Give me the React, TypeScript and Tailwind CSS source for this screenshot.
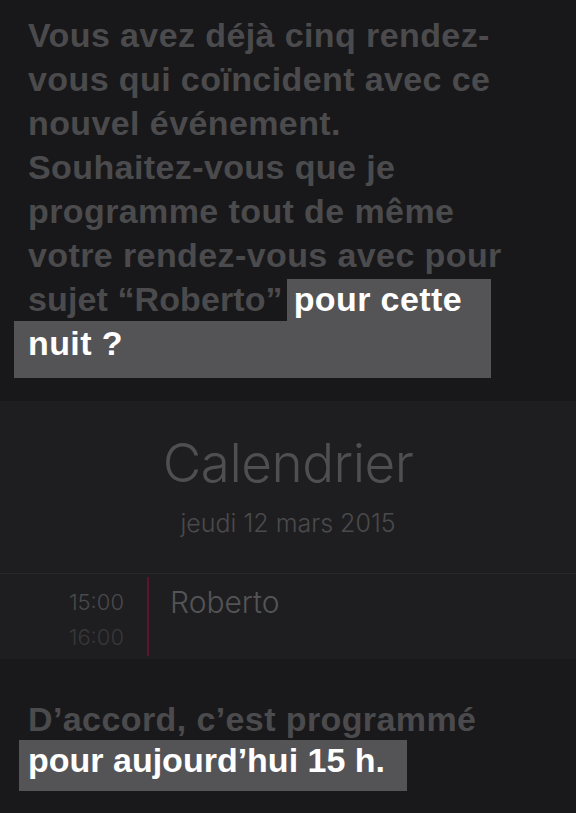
import React from "react";

const bold = { fontFamily: '"Liberation Sans", Arial, sans-serif' };
const light = { fontFamily: 'Inter, "Liberation Sans", sans-serif' };

export default function App() {
  const lines = [
    "Vous avez déjà cinq rendez-",
    "vous qui coïncident avec ce",
    "nouvel événement.",
    "Souhaitez-vous que je",
    "programme tout de même",
    "votre rendez-vous avec pour",
  ];
  return (
    <div className="w-[576px] h-[813px] bg-[#18181a] flex flex-col overflow-hidden">
      <div
        className="pt-[13px] pl-[14px] w-[491px] text-[34px] leading-[44px] font-bold tracking-[0.4px] text-[#4b4b4d]"
        style={bold}
      >
        {lines.map((l) => (
          <div key={l} className="pl-[14px] whitespace-nowrap">
            {l}
          </div>
        ))}
        <div className="flex h-[44px] items-end">
          <span className="pl-[14px] whitespace-nowrap self-start tracking-[0.1px]">sujet “Roberto”</span>
          <span className="flex-1 ml-[4px] pl-[7px] h-[42px] leading-[40px] bg-[#545457] text-white whitespace-nowrap">
            pour cette
          </span>
        </div>
        <div className="bg-[#545457] text-white pl-[14px] pb-[13px]">nuit ?</div>
      </div>

      <div className="mt-[23px] bg-[#1e1e20] flex flex-col">
        <div className="flex flex-col items-center pt-[32px] pb-[35px]" style={light}>
          <div className="text-[53px] leading-[60px] font-light text-[#4f4f51] tracking-[-0.5px]">
            Calendrier
          </div>
          <div className="mt-[15px] text-[25px] leading-[30px] font-light text-[#4a4a4c]">
            jeudi 12 mars 2015
          </div>
        </div>
        <div className="h-px bg-[#28282a]" />
        <div className="flex h-[85px]">
          <div className="w-[124px] flex flex-col items-end pt-[16px] text-[22px] font-light" style={light}>
            <span className="text-[#4a4a4c] leading-[24px]">15:00</span>
            <span className="text-[#38383a] leading-[24px] mt-[11px]">16:00</span>
          </div>
          <div className="ml-[23px] mt-[3px] mb-[3px] w-[2px] bg-[#5e1430]" />
          <div className="ml-[21px] pt-[10px] text-[30px] leading-[36px] font-light text-[#545456]" style={light}>
            Roberto
          </div>
        </div>
      </div>

      <div className="flex-1 bg-[#19191b] pt-[40px] text-[34px] font-bold tracking-[0.4px]" style={bold}>
        <div className="pl-[28px] leading-[40px] text-[#4b4b4d] whitespace-nowrap">
          D’accord, c’est programmé
        </div>
        <div className="mt-[1px] ml-[19px] w-[388px] h-[51px] pl-[9px] leading-[40px] bg-[#545457] text-white whitespace-nowrap tracking-[0px]">
          pour aujourd’hui 15 h.
        </div>
      </div>
    </div>
  );
}
